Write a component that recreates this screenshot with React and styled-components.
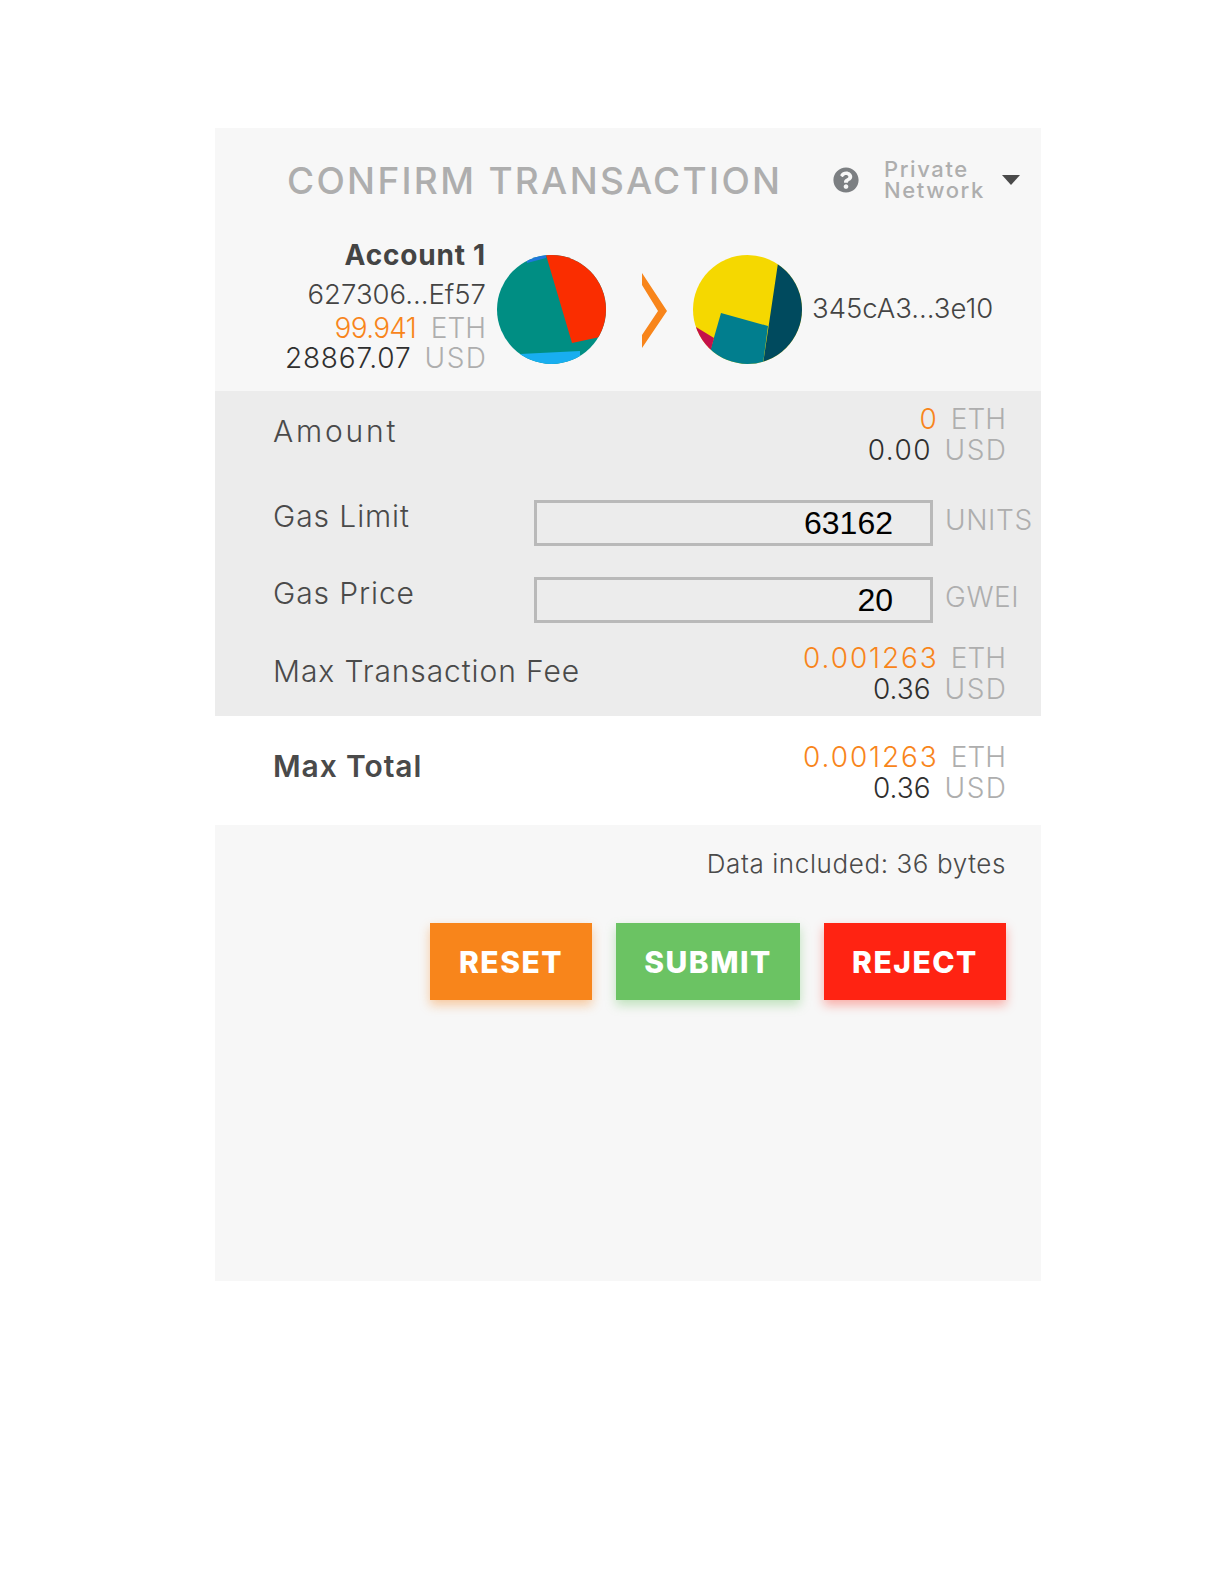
import styled, { createGlobalStyle } from "styled-components";
import { FaQuestionCircle } from "react-icons/fa";

const GlobalStyle = createGlobalStyle`
  html, body {
    margin: 0;
    padding: 0;
    background: #fff;
    font-family: Inter, "Open Sans", sans-serif;
  }
`

const Page = styled.div`
  box-sizing: border-box;
  height: 1584px;
  padding: 128px 0 0 215px;
`

const Panel = styled.div`
  width: 826px;
  display: flex;
  flex-direction: column;
  background: #f7f7f7;
`

const Header = styled.header`
  height: 104px;
  padding-left: 72px;
  display: flex;
  align-items: center;
`

const Title = styled.h2`
  margin: 0;
  width: 490px;
  font-size: 37px;
  font-weight: 500;
  letter-spacing: 2.3px;
  white-space: nowrap;
  color: #aeaeae;
`

const HelpIcon = styled(FaQuestionCircle)`
  margin-left: 56px;
  font-size: 26px;
  color: #7c7f82;
`

const NetworkName = styled.div`
  width: 118px;
  margin-left: 25px;
  font-size: 22px;
  font-weight: 500;
  letter-spacing: 1.6px;
  line-height: 21px;
  color: #aeaeae;
`

const Caret = styled.span`
  width: 0;
  height: 0;
  border-left: 9px solid transparent;
  border-right: 9px solid transparent;
  border-top: 10px solid #4a4a4a;
`

const AccountRow = styled.div`
  height: 159px;
  display: flex;
  align-items: flex-start;
`

const Sender = styled.div`
  box-sizing: border-box;
  width: 271px;
  padding-top: 3px;
  text-align: right;
`

const AccountName = styled.div`
  font-size: 28px;
  font-weight: 700;
  letter-spacing: 0.8px;
  line-height: 41px;
  color: #444;
`

const Address = styled.div`
  font-size: 27.5px;
  font-weight: 300;
  line-height: 37px;
  color: #444;
  white-space: nowrap;
`

const Line = styled.div`
  font-size: 28px;
  font-weight: 300;
  line-height: ${(p) => p.$height || 30}px;
  white-space: nowrap;
  text-align: right;
`

// trailing letter-spacing is taken back off the margin so the gap stays 14px
const Value = styled.span`
  margin-right: ${(p) => 14 - (p.$track || 0)}px;
  letter-spacing: ${(p) => p.$track || 0}px;
  color: ${(p) => (p.$eth ? "#f8851b" : "#2f2f2f")};
`

const Unit = styled.span`
  margin-right: ${(p) => -(p.$track || 0)}px;
  letter-spacing: ${(p) => p.$track || 0}px;
  color: #aeaeae;
`

const Identicon = styled.svg`
  flex: none;
  width: 109px;
  height: 109px;
  margin: 23px 0 0 ${(p) => p.$left}px;
`

const Chevron = styled.svg`
  flex: none;
  width: 25px;
  height: 75px;
  margin: 41px 0 0 36px;
`

const Receiver = styled(Address)`
  margin: 58px 0 0 10px;
`

const Details = styled.section`
  height: 325px;
  box-sizing: border-box;
  padding: 13px 35px 0 58px;
  background: #ececec;
`

const Row = styled.div`
  display: flex;
  align-items: center;
  justify-content: space-between;
  margin-top: ${(p) => p.$top || 0}px;
`

const Label = styled.div`
  padding-bottom: ${(p) => p.$lift || 0}px;
  font-size: 30px;
  font-weight: ${(p) => (p.$strong ? 600 : 300)};
  letter-spacing: ${(p) => p.$track || 0.9}px;
  line-height: 36px;
  color: #4a4a4a;
  white-space: nowrap;
`

const GasRow = styled.div`
  display: flex;
  align-items: center;
  height: 46px;
  margin: ${(p) => p.$top}px -35px 0 0;
`

const GasLabel = styled(Label)`
  width: 261px;
`

const GasInput = styled.input`
  box-sizing: border-box;
  width: 399px;
  height: 46px;
  padding: 0 37px 0 0;
  border: 3px solid #b9b9b9;
  background: transparent;
  outline: none;
  text-align: right;
  font-family: "Liberation Sans", Arial, sans-serif;
  font-size: 32px;
  color: #000;
`

const GasUnit = styled.span`
  margin-left: 12px;
  padding-bottom: 6px;
  font-size: 28px;
  font-weight: 300;
  letter-spacing: 0.6px;
  color: #aeaeae;
`

const Total = styled.section`
  height: 109px;
  box-sizing: border-box;
  padding: 26px 35px 0 58px;
  background: #fff;
`

const Footer = styled.section`
  height: 456px;
  box-sizing: border-box;
  padding: 20px 35px 0 0;
`

const DataNote = styled.div`
  font-size: 26px;
  font-weight: 300;
  letter-spacing: 0.6px;
  line-height: 38px;
  text-align: right;
  color: #4a4a4a;
`

const Buttons = styled.div`
  display: flex;
  justify-content: flex-end;
  gap: 24px;
  margin-top: 40px;
`

const Button = styled.button`
  width: ${(p) => p.$width}px;
  height: 77px;
  padding: 0;
  border: 0;
  background: ${(p) => p.$color};
  box-shadow: 0 5px 10px ${(p) => p.$shadow};
  font-family: Inter, sans-serif;
  font-size: 30px;
  font-weight: 800;
  letter-spacing: 1.5px;
  color: #fff;
`

function Amounts({ eth, usd, ethTrack, usdTrack }) {
  return (
    <div>
      <Line $height={31}><Value $eth $track={ethTrack}>{eth}</Value><Unit>ETH</Unit></Line>
      <Line $height={31}><Value $track={usdTrack}>{usd}</Value><Unit $track={1.5}>USD</Unit></Line>
    </div>
  );
}

export default function App() {
  return (
    <Page>
      <GlobalStyle />
      <Panel>
        <Header>
          <Title>CONFIRM TRANSACTION</Title>
          <HelpIcon />
          <NetworkName>Private<br />Network</NetworkName>
          <Caret />
        </Header>

        <AccountRow>
          <Sender>
            <AccountName>Account 1</AccountName>
            <Address>627306...Ef57</Address>
            <Line><Value $eth $track={-0.7}>99.941</Value><Unit>ETH</Unit></Line>
            <Line><Value $track={0.8}>28867.07</Value><Unit $track={1.5}>USD</Unit></Line>
          </Sender>
          <Identicon $left={11} viewBox="0 0 109 109">
            <defs>
              <clipPath id="senderClip"><circle cx="54.5" cy="54.5" r="54.5" /></clipPath>
            </defs>
            <g clipPath="url(#senderClip)">
              <rect width="109" height="109" fill="#008e83" />
              <polygon points="30,0 49,0 49,3 30,8" fill="#1e78dc" />
              <polygon points="49,0 75,88 103,82 109,82 109,0" fill="#fa2d00" />
              <polygon points="23,99 83,96 83,102 70,109 23,109" fill="#18aef0" />
            </g>
          </Identicon>
          <Chevron viewBox="0 0 25 75">
            <polygon points="0,0 25,38 0,75 0,62 16,38 0,12" fill="#f8851b" />
          </Chevron>
          <Identicon $left={26} viewBox="0 0 109 109">
            <defs>
              <clipPath id="receiverClip"><circle cx="54.5" cy="54.5" r="54.5" /></clipPath>
            </defs>
            <g clipPath="url(#receiverClip)">
              <rect width="109" height="109" fill="#f5d800" />
              <polygon points="85,8 70,109 109,109 109,0 85,0" fill="#004a5e" />
              <polygon points="28,58 75,71 70,109 18,109 18,93" fill="#017e8e" />
              <polygon points="3,72 21,83 18,94 18,109 0,109 0,72" fill="#c4114a" />
            </g>
          </Identicon>
          <Receiver>345cA3...3e10</Receiver>
        </AccountRow>

        <Details>
          <Row>
            <Label $lift={8} $track={2.8}>Amount</Label>
            <Amounts eth="0" usd="0.00" usdTrack={1.5} />
          </Row>
          <GasRow $top={34}>
            <GasLabel $lift={14}>Gas Limit</GasLabel>
            <GasInput readOnly value="63162" />
            <GasUnit>UNITS</GasUnit>
          </GasRow>
          <GasRow $top={31}>
            <GasLabel $lift={14}>Gas Price</GasLabel>
            <GasInput readOnly value="20" />
            <GasUnit>GWEI</GasUnit>
          </GasRow>
          <Row $top={20}>
            <Label $lift={6}>Max Transaction Fee</Label>
            <Amounts eth="0.001263" usd="0.36" ethTrack={1.9} />
          </Row>
        </Details>

        <Total>
          <Row>
            <Label $strong $lift={14}>Max Total</Label>
            <Amounts eth="0.001263" usd="0.36" ethTrack={1.9} />
          </Row>
        </Total>

        <Footer>
          <DataNote>Data included: 36 bytes</DataNote>
          <Buttons>
            <Button $width={162} $color="#f8851b" $shadow="rgba(248,133,27,0.4)">RESET</Button>
            <Button $width={184} $color="#6bc363" $shadow="rgba(107,195,99,0.4)">SUBMIT</Button>
            <Button $width={182} $color="#ff2312" $shadow="rgba(255,35,18,0.35)">REJECT</Button>
          </Buttons>
        </Footer>
      </Panel>
    </Page>
  );
}
